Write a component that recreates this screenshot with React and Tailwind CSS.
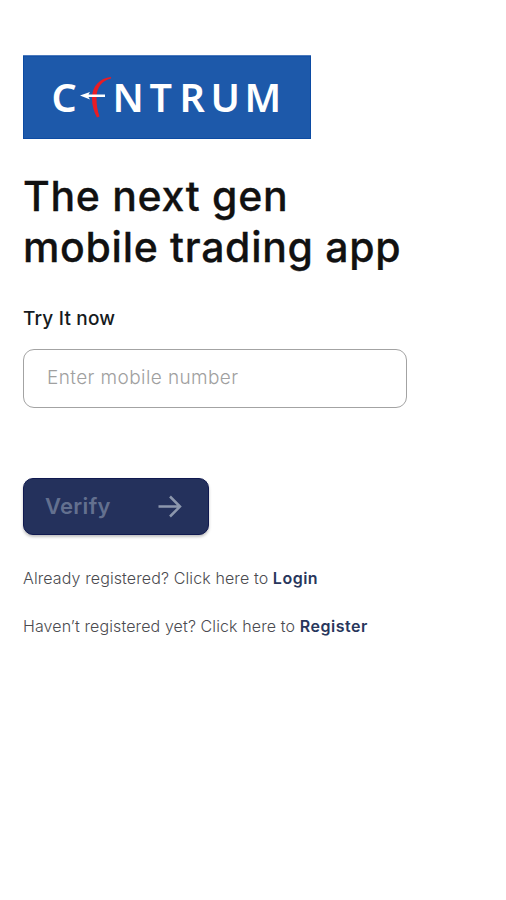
import { useState } from 'react'

const LINKS = [
  { text: 'Already registered? Click here to ', label: 'Login' },
  { text: 'Haven’t registered yet? Click here to ', label: 'Register' },
]

function Logo() {
  return (
    <svg width="288" height="84" viewBox="0 0 288 84" className="block" role="img" aria-label="Centrum">
      <rect y="0.5" width="288" height="83.5" fill="#1d59aa" />
      <rect x="0.5" y="1" width="287" height="82.5" fill="none" stroke="#0c4ba3" />
      <g fill="#fff" fontFamily='"Noto Sans", "Open Sans", sans-serif' fontWeight="600" fontSize="39.5">
        <text x="28.500" y="57">C</text>
        <text x="89.500 126.500 156.500 187.500 221.500" y="57">NTRUM</text>
      </g>
      {/* bow */}
      <path d="M88 22C77 23 69 31 69 43c0 8 2 14 5 19.500l2.500-1C74.500 56 73.500 50 73.500 43 73.500 32 79 26 88 23.500z" fill="#e81c24" />
      {/* arrow */}
      <path d="M57 40.500l10-3.500-1.500 2.500H82v2.600H65.500l1.500 2.400z" fill="#fff" />
    </svg>
  )
}

export default function App() {
  const [mobile, setMobile] = useState('')

  return (
    <main className="min-h-screen bg-white pl-[23px] pt-[55px] font-['Inter',sans-serif]">
      <Logo />

      <h1 className="mt-[32px] text-[41px] font-medium leading-[51px] tracking-[0.7px] text-[#111111] [-webkit-text-stroke:0.3px_#111111]">
        The next gen<br />
        mobile trading app
      </h1>

      <label htmlFor="mobile" className="mt-[34px] block text-[19px] font-medium leading-6 tracking-[0.2px] text-[#151a20]">
        Try It now
      </label>
      <input
        id="mobile"
        type="tel"
        value={mobile}
        onChange={e => setMobile(e.target.value)}
        placeholder="Enter mobile number"
        className="mt-[18px] block h-[59px] w-[384px] rounded-[11px] border border-[#a3a3a3] px-[23px] pb-[2px] text-[19px] font-light tracking-[0.4px] outline-none placeholder:text-[#a0a0a0]"
      />

      <button className="mt-[70px] flex h-[57px] w-[186px] items-center justify-between rounded-[10px] border border-[#101950] bg-[#24315c] pl-[21px] pr-[26px] text-[22px] font-semibold tracking-[0.3px] text-[#63708f] shadow-[0_2px_3px_rgba(0,0,0,0.25)]">
        <span>Verify</span>
        <svg width="24" height="24" viewBox="0 0 24 24" fill="none" stroke="#8c97ad" strokeWidth="2.5">
          <path d="M0.500 11.500H22M12 1.500L22 11.500 12 21.500" />
        </svg>
      </button>

      <div className="mt-[31px] flex flex-col gap-6">
        {LINKS.map(l => (
          <p key={l.label} className="whitespace-nowrap text-[16px] font-light leading-6 tracking-[0.11px] text-[#4b4b50]">
            {l.text}
            <a href="#" className="font-semibold tracking-[0.5px] text-[#28365c]">{l.label}</a>
          </p>
        ))}
      </div>
    </main>
  )
}
